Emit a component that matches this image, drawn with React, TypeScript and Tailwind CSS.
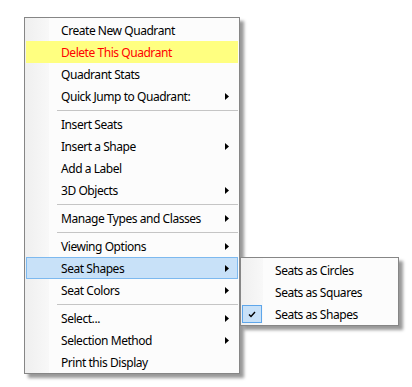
import React from 'react'

type Item =
  | { kind: 'item'; label: string; sub?: boolean; state?: 'warn' | 'open' }
  | { kind: 'sep' }

const items: Item[] = [
  { kind: 'item', label: 'Create New Quadrant' },
  { kind: 'item', label: 'Delete This Quadrant', state: 'warn' },
  { kind: 'item', label: 'Quadrant Stats' },
  { kind: 'item', label: 'Quick Jump to Quadrant:', sub: true },
  { kind: 'sep' },
  { kind: 'item', label: 'Insert Seats' },
  { kind: 'item', label: 'Insert a Shape', sub: true },
  { kind: 'item', label: 'Add a Label' },
  { kind: 'item', label: '3D Objects', sub: true },
  { kind: 'sep' },
  { kind: 'item', label: 'Manage Types and Classes', sub: true },
  { kind: 'sep' },
  { kind: 'item', label: 'Viewing Options', sub: true },
  { kind: 'item', label: 'Seat Shapes', sub: true, state: 'open' },
  { kind: 'item', label: 'Seat Colors', sub: true },
  { kind: 'sep' },
  { kind: 'item', label: 'Select...', sub: true },
  { kind: 'item', label: 'Selection Method', sub: true },
  { kind: 'item', label: 'Print this Display' },
]

const shapes = [
  { label: 'Seats as Circles', checked: false },
  { label: 'Seats as Squares', checked: false },
  { label: 'Seats as Shapes', checked: true },
]

function Arrow() {
  return (
    <svg width="4" height="7" viewBox="0 0 4 7" className="block">
      <path d="M0 0 L4 3.5 L0 7 Z" fill="#000" />
    </svg>
  )
}

function Check() {
  return (
    <svg width="8" height="7" viewBox="0 0 8 7" className="block">
      <path d="M1 3.5 L3 5.5 L7 1" fill="none" stroke="#000" strokeWidth="1.4" />
    </svg>
  )
}

function MenuRow({ item }: { item: Extract<Item, { kind: 'item' }> }) {
  let rowClass = 'border border-transparent'
  let textClass = 'text-[#000]'
  if (item.state === 'warn') {
    rowClass = 'border border-transparent bg-[#ffff80]'
    textClass = 'text-[#ff0000]'
  }
  if (item.state === 'open') {
    rowClass = 'border border-[#7db9ef] bg-[#c8e1f8]'
  }
  return (
    <div className={`flex h-[22px] items-center mx-px pl-[34px] pr-[8px] ${rowClass}`}>
      <span className={`flex-1 leading-none pt-px ${textClass}`}>{item.label}</span>
      {item.sub && <Arrow />}
    </div>
  )
}

export default function App() {
  return (
    <div
      className="w-[412px] h-[387px] bg-white pl-[24px] pt-[17px] text-[12px] tracking-[-0.45px]"
      style={{ fontFamily: '"Segoe UI", "Noto Sans", "Open Sans", sans-serif' }}
    >
      <div className="relative w-[216px] border border-[#868686] bg-[#fcfcfc] pt-px shadow-[4px_4px_3px_rgba(0,0,0,0.4)]">
        <div className="absolute left-0 top-0 bottom-0 w-[24px] bg-gradient-to-r from-[#efefef] to-[#f8f8f8]" />
        <div className="relative">
          {items.map((item, i) =>
            item.kind === 'sep' ? (
              <div key={i} className="h-[6px] flex items-center pl-[32px] pr-px">
                <div className="h-px w-full bg-[#c5c5c5]" />
              </div>
            ) : (
              <MenuRow key={i} item={item} />
            )
          )}
        </div>

        <div className="absolute left-[215px] top-[239px] w-[159px] border border-[#868686] bg-[#fcfcfc] pt-px shadow-[4px_4px_3px_rgba(0,0,0,0.4)]">
          <div className="absolute left-0 top-0 bottom-0 w-[22px] bg-gradient-to-r from-[#efefef] to-[#f8f8f8]" />
          <div className="relative">
            {shapes.map((s) => (
              <div key={s.label} className="flex h-[22px] items-center">
                <div className="w-[34px] flex items-center pl-px">
                  {s.checked && (
                    <div className="w-[20px] h-[18px] flex items-center justify-center border border-[#5ea6ea] bg-[#c8e1f8]">
                      <Check />
                    </div>
                  )}
                </div>
                <span className="leading-none pt-px text-[#000]">{s.label}</span>
              </div>
            ))}
          </div>
        </div>
      </div>
    </div>
  )
}
